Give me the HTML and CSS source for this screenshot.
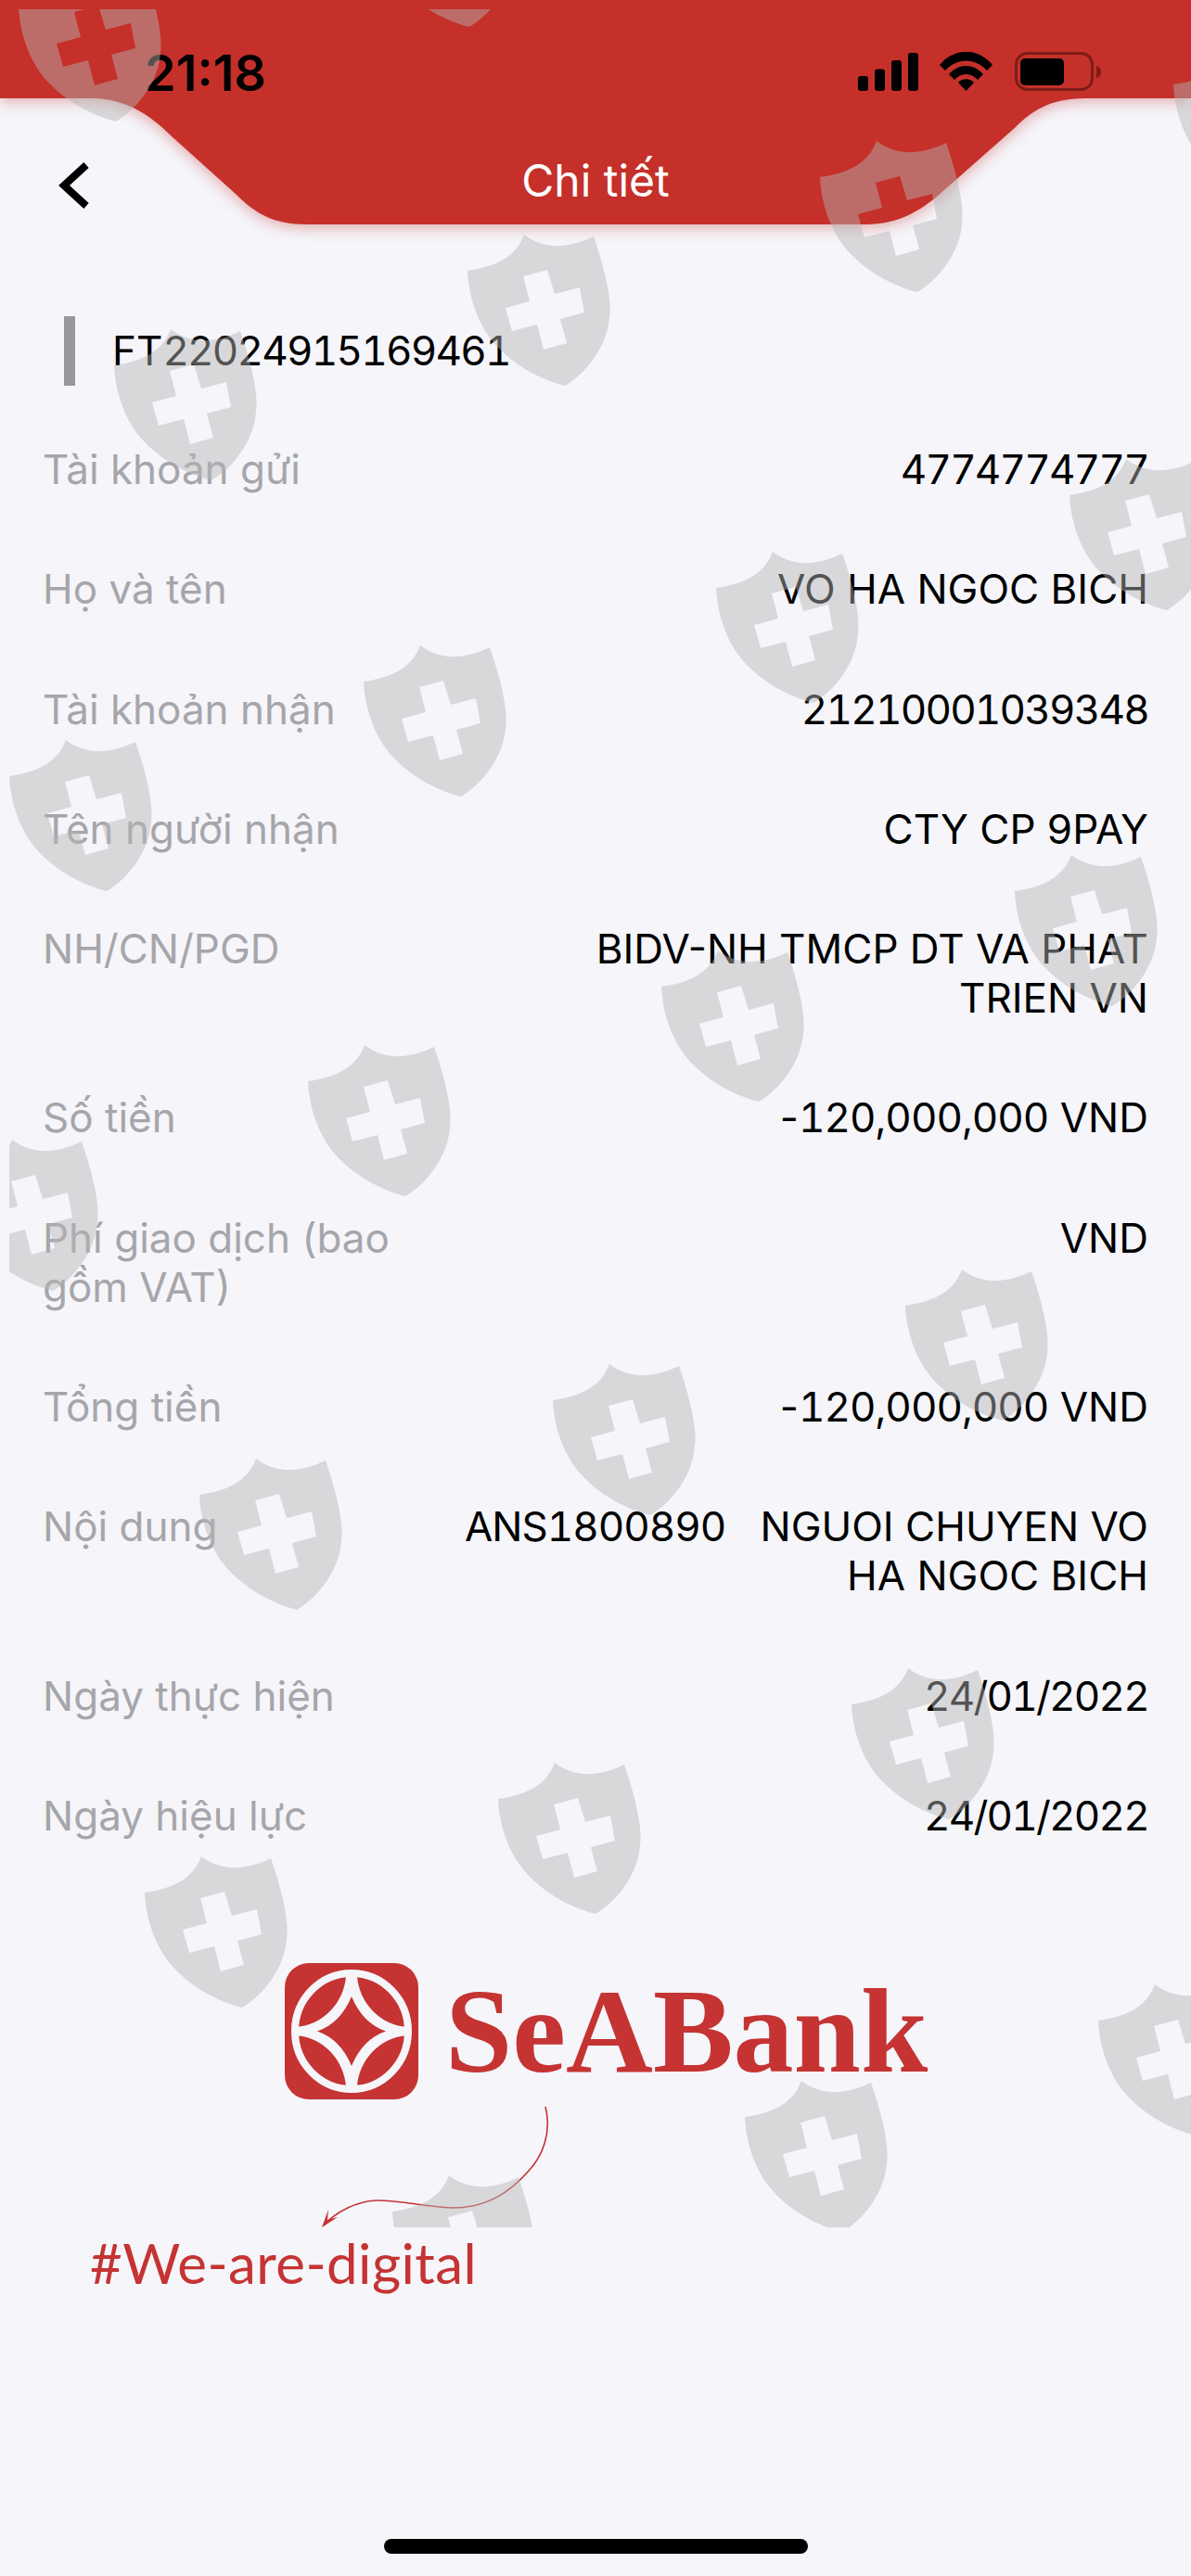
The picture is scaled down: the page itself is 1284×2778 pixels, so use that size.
FILE: index.html
```html
<!DOCTYPE html>
<html lang="vi">
<head>
  <meta charset="UTF-8" />
  <title>Chi tiết</title>
  <link rel="stylesheet" href="styles.css">
</head>
<body>
  <div class="screen">
    <header class="header">
      <svg class="header-bg" viewBox="0 0 1284 242" width="1284" height="242">
        <path d="M0 0H1284V106H1170C1132 106 1112 120 1095 137L1010 212C985 232 965 242 930 242H330C295 242 275 230 255 210L185 147C160 122 135 107 100 106H0Z" />
      </svg>
      <div class="status">
        <span class="time">21:18</span>
        <svg class="status-icons" viewBox="925 54 262 42" width="262" height="42">
          <rect x="925" y="80" width="11" height="16" rx="3" />
          <rect x="943" y="72.500" width="11" height="23.500" rx="3" />
          <rect x="961" y="63" width="11" height="33" rx="3" />
          <rect x="979" y="55" width="11" height="41" rx="3" />
          <path d="M1013 68C1029 49 1054 49 1070 68L1064 74C1051 60 1032 60 1019 74Z" />
          <path d="M1023 78C1034 66 1049 66 1060 78L1054 84C1047 76 1036 76 1029 84Z" />
          <path d="M1033 87C1038 82 1045 82 1050 87L1041.500 96Z" />
          <rect class="batt-shell" x="1095.500" y="55.500" width="82" height="39" rx="12" />
          <rect x="1100" y="61" width="47" height="29" rx="5" />
          <path class="batt-nub" d="M1182 69C1186 70 1187 73 1187 75.500C1187 78 1186 81 1182 82Z" />
        </svg>
      </div>
      <div class="nav">
        <svg class="back" viewBox="0 0 36 54" width="36" height="54">
          <path d="M33 5L9 27L33 49" />
        </svg>
        <h1 class="title">Chi tiết</h1>
      </div>
    </header>

    <div class="ref"><span class="ref-bar"></span><span>FT<span class="num">22024915169461</span></span></div>

    <div class="rows">
      <div class="row"><span class="label">Tài khoản gửi</span><span class="value num">4774774777</span></div>
      <div class="row"><span class="label">Họ và tên</span><span class="value">VO HA NGOC BICH</span></div>
      <div class="row"><span class="label">Tài khoản nhận</span><span class="value num">21210001039348</span></div>
      <div class="row"><span class="label">Tên người nhận</span><span class="value">CTY CP 9PAY</span></div>
      <div class="row"><span class="label">NH/CN/PGD</span><span class="value">BIDV-NH TMCP DT VA PHAT<br>TRIEN VN</span></div>
      <div class="row"><span class="label">Số tiền</span><span class="value">-<span class="num amount">120,000,000</span> VND</span></div>
      <div class="row"><span class="label">Phí giao dịch (bao gồm VAT)</span><span class="value">VND</span></div>
      <div class="row"><span class="label">Tổng tiền</span><span class="value">-<span class="num amount">120,000,000</span> VND</span></div>
      <div class="row"><span class="label">Nội dung</span><span class="value"><span class="num amount">ANS1800890</span>   NGUOI CHUYEN VO<br>HA NGOC BICH</span></div>
      <div class="row"><span class="label">Ngày thực hiện</span><span class="value num">24/01/2022</span></div>
      <div class="row"><span class="label">Ngày hiệu lực</span><span class="value num">24/01/2022</span></div>
    </div>

    <footer class="brand">
      <div class="brand-row">
        <svg class="brand-icon" viewBox="0 0 144 147" width="144" height="147">
          <rect class="icon-red" width="144" height="147" rx="26" />
          <ellipse class="icon-ring" cx="72" cy="73.500" rx="61" ry="62.500" />
          <path class="icon-white" d="M66 14C64 42 42 67 12 69V78C42 80 64 105 66 133H78C80 105 102 80 132 78V69C102 67 80 42 78 14Z" />
          <path class="icon-red" d="M72 36Q84 65 109 73.500Q84 82 72 111Q60 82 35 73.500Q60 65 72 36Z" />
        </svg>
        <span class="brand-name">SeABank</span>
      </div>
      <svg class="arrow" viewBox="340 2265 260 145" width="260" height="145">
        <path class="arrow-line" d="M588 2272C595 2300 585 2325 570 2341C550 2364 525 2381 488 2381C455 2380 430 2372 405 2373C385 2374 362 2385 349 2400" />
        <path class="arrow-head" d="M347 2402L354 2383L353 2394L364 2391Z" />
      </svg>
      <div class="tagline">#We-are-digital</div>
    </footer>

    <div class="home-bar"></div>

    <!-- watermark sits on top of everything, text shows through it -->
    <svg class="watermark" viewBox="0 0 1284 2778" width="1284" height="2778">
      <defs>
        <clipPath id="wm-clip"><rect x="10" y="10" width="1274" height="2392" /></clipPath>
        <path id="shield" fill-rule="evenodd" d="M1 40C30 36 53 26 62 1C72 9 86 14 102 13C115 12 127 8 137 3C148 35 157 70 154 90C152 120 130 150 106 164C70 155 38 132 22 108C8 86 2 62 1 40ZM61 46L87 39L95 65L122 58L127 85L101 92L108 118L83 125L76 98L49 105L42 80L68 73Z" />
      </defs>
      <g clip-path="url(#wm-clip)">
        <use href="#shield" x="19" y="-33" />
        <use href="#shield" x="400" y="-135" />
        <use href="#shield" x="883" y="151" />
        <use href="#shield" x="503" y="252" />
        <use href="#shield" x="122" y="354" />
        <use href="#shield" x="1264" y="51" />
        <use href="#shield" x="1152" y="494" />
        <use href="#shield" x="771" y="594" />
        <use href="#shield" x="391" y="695" />
        <use href="#shield" x="9" y="797" />
        <use href="#shield" x="1093" y="921" />
        <use href="#shield" x="712" y="1024" />
        <use href="#shield" x="331" y="1126" />
        <use href="#shield" x="-49" y="1228" />
        <use href="#shield" x="975" y="1368" />
        <use href="#shield" x="595" y="1470" />
        <use href="#shield" x="214" y="1572" />
        <use href="#shield" x="917" y="1798" />
        <use href="#shield" x="536" y="1900" />
        <use href="#shield" x="155" y="2001" />
        <use href="#shield" x="1183" y="2139" />
        <use href="#shield" x="802" y="2243" />
        <use href="#shield" x="422" y="2345" />
      </g>
    </svg>
  </div>
</body>
</html>
```

FILE: styles.css
```css
* {
  box-sizing: border-box;
}

body {
  margin: 0;
  background-color: #f5f5fa;
  font-family: 'Inter', 'Liberation Sans', sans-serif;
  color: #000;
}

.screen {
  position: relative;
  width: 1284px;
  height: 2778px;
  overflow: hidden;
  background-color: #f5f5fa;
}

/* header */
.header {
  position: relative;
  height: 242px;
}

.header-bg {
  position: absolute;
  top: 0;
  left: 0;
  fill: #c5302a;
  filter: drop-shadow(0 3px 8px rgba(197, 48, 42, 0.4));
}

.status {
  position: relative;
  display: flex;
  justify-content: space-between;
  align-items: center;
  height: 106px;
  padding: 50px 97px 0 156px;
}

.time {
  font-size: 54px;
  font-weight: 600;
  line-height: 53px;
}

.status-icons {
  margin-bottom: 3px;
}

.batt-shell {
  fill: none;
  stroke: #7d1c18;
  stroke-width: 3;
}

.batt-nub {
  fill: #7d1c18;
}

.nav {
  position: relative;
  height: 90px;
  margin-top: 44px;
  display: flex;
  align-items: center;
  justify-content: center;
}

.back {
  position: absolute;
  left: 60px;
  top: 23px;
  fill: none;
  stroke: #000;
  stroke-width: 8;
}

.title {
  margin: 0;
  font-size: 48px;
  font-weight: 400;
  line-height: 54px;
  color: #fff;
}

/* reference number */
.ref {
  display: flex;
  align-items: center;
  gap: 40px;
  height: 75px;
  margin: 99px 0 64px 69px;
  font-size: 44px;
  line-height: 53px;
}

.ref-bar {
  width: 12px;
  height: 75px;
  background-color: #98989c;
}

/* digits in the reference are wider than Inter's default ones */
.num {
  font-variant-numeric: tabular-nums;
  letter-spacing: -1.8px;
}

.num.amount {
  letter-spacing: -1px;
}

/* detail rows */
.rows {
  display: flex;
  flex-direction: column;
  gap: 76.3px;
  padding: 0 46px;
}

.row {
  display: grid;
  grid-template-columns: 400px 1fr;
  gap: 40px;
  font-size: 44px;
  line-height: 53px;
}

.label {
  color: #a6a6aa;
}

.value {
  text-align: right;
  white-space: pre-wrap;
}

/* logo block */
.brand {
  position: relative;
  margin-top: 132px;
}

.brand-row {
  display: flex;
  align-items: center;
  gap: 29px;
  padding-left: 307px;
}

.brand-icon {
  flex: none;
}

.icon-red {
  fill: #c53332;
}

.icon-white {
  fill: #f5f5fa;
}

.icon-ring {
  fill: none;
  stroke: #f5f5fa;
  stroke-width: 8;
}

.brand-name {
  font-family: 'Liberation Serif', serif;
  font-size: 130px;
  font-weight: 700;
  line-height: 147px;
  color: #c53332;
}

.arrow {
  position: absolute;
  left: 340px;
  top: 148px;
}

.arrow-line {
  fill: none;
  stroke: #c53332;
  stroke-width: 1.6;
}

.arrow-head {
  fill: #c53332;
}

.tagline {
  margin: 140px 0 0 97px;
  font-family: 'Lato', sans-serif;
  font-size: 60px;
  font-weight: 400;
  line-height: 72px;
  letter-spacing: 0.4px;
  color: #c53332;
}

.home-bar {
  position: absolute;
  left: 414px;
  top: 2738px;
  width: 457px;
  height: 16px;
  border-radius: 8px;
  background-color: #000;
}

.watermark {
  position: absolute;
  top: 0;
  left: 0;
  pointer-events: none;
  fill: rgba(180, 180, 180, 0.46);
}
```
